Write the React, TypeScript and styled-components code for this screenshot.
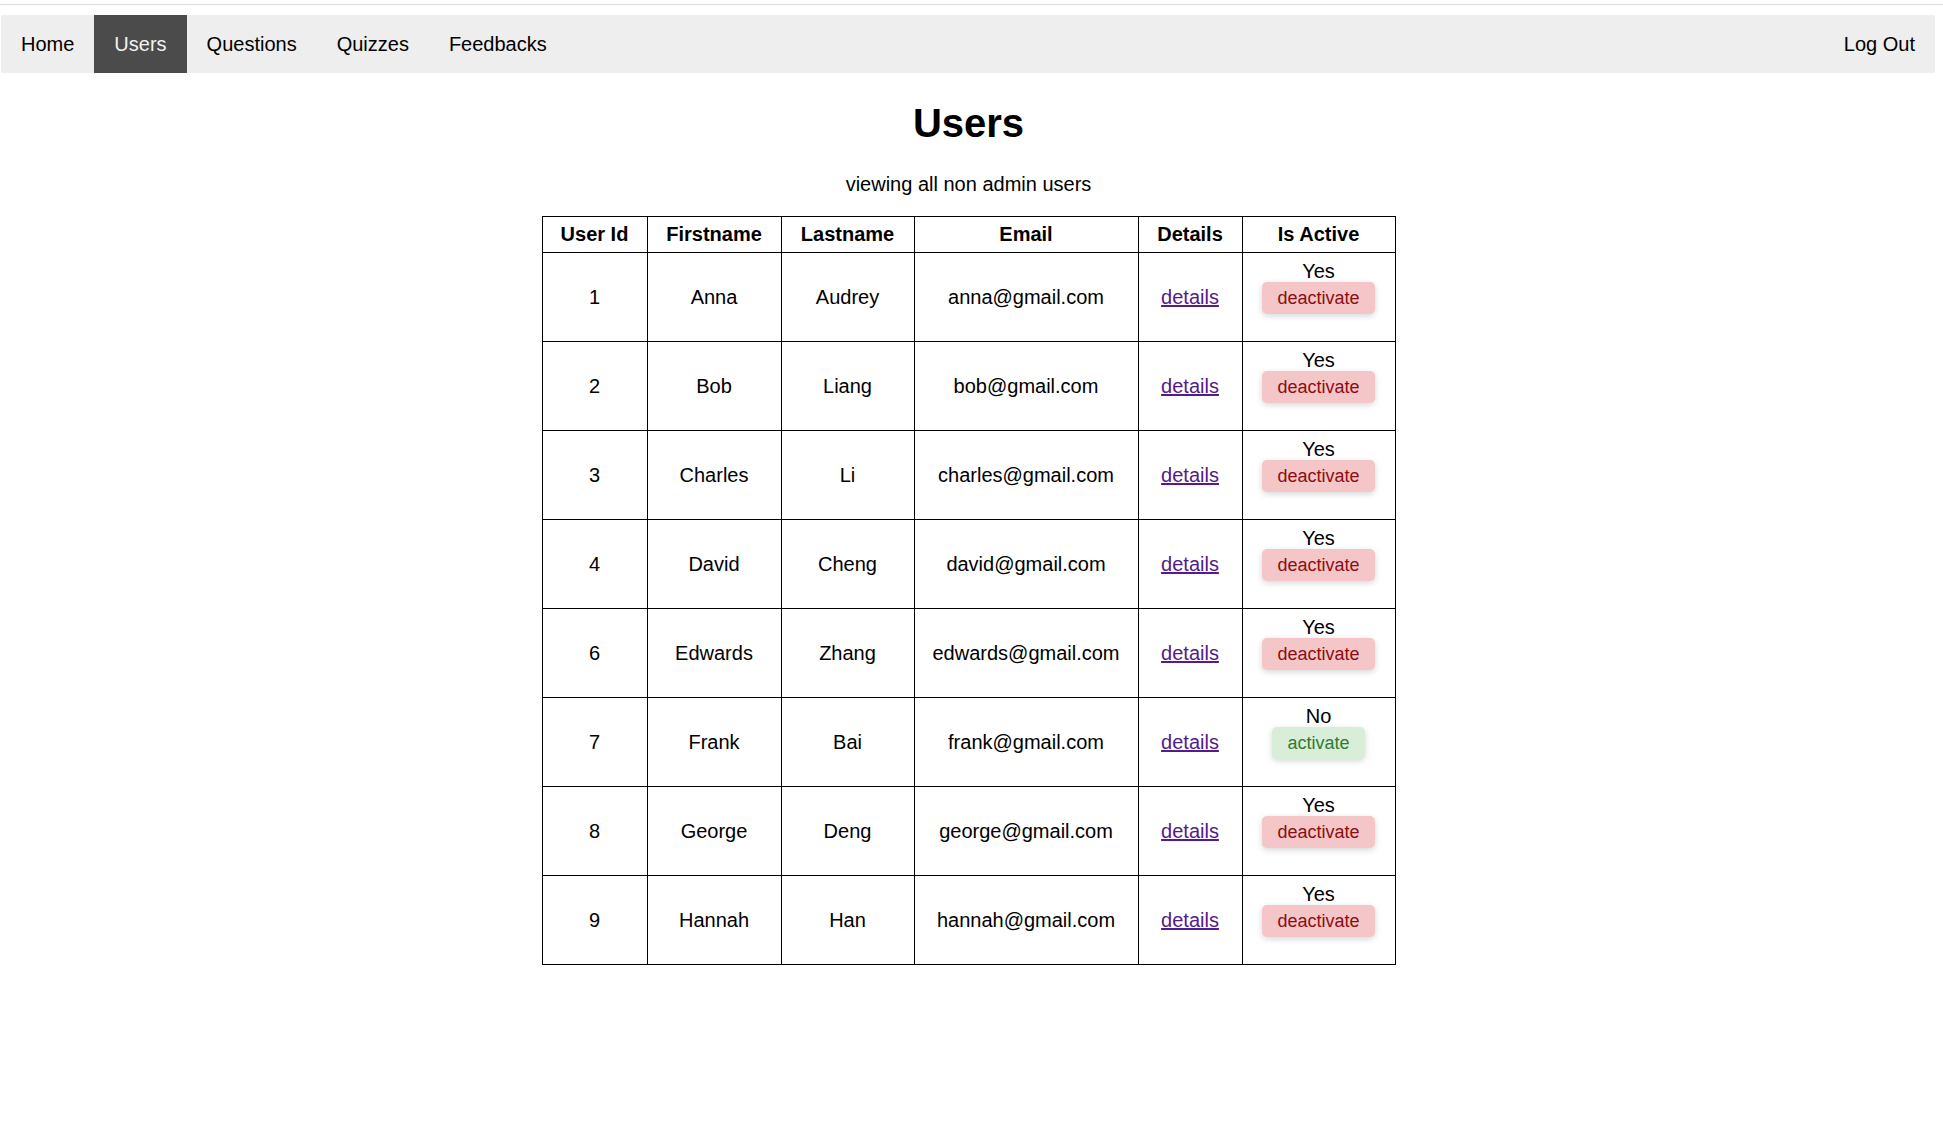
import React from "react";
import styled, { createGlobalStyle } from "styled-components";

const GlobalStyle = createGlobalStyle`
  html, body {
    margin: 0;
    padding: 0;
    background: #ffffff;
    font-family: "Liberation Sans", Arial, Helvetica, sans-serif;
    color: #000;
  }
`;

const Page = styled.div`
  display: flex;
  flex-direction: column;
  min-height: 1133px;
`;

const TopRule = styled.div`
  margin-top: 4px;
  height: 1px;
  background: #dcdcdc;
`;

const NavBar = styled.nav`
  margin: 10px 8px 0 1px;
  display: flex;
  align-items: stretch;
  background: #eeeeee;
  height: 58px;
`;

const NavLeft = styled.div`
  display: flex;
  flex: 1;
`;

const NavItem = styled.a<{ $active?: boolean }>`
  display: flex;
  align-items: center;
  padding: 0 20px;
  font-size: 20px;
  text-decoration: none;
  color: ${(p) => (p.$active ? "#f2f2f2" : "#000")};
  background: ${(p) => (p.$active ? "#4b4b4b" : "transparent")};
  cursor: pointer;
`;

const Main = styled.main`
  display: flex;
  flex-direction: column;
  align-items: center;
  margin-right: 6px;
`;

const Title = styled.h1`
  font-size: 40px;
  font-weight: bold;
  margin: 27px 0 27px;
  line-height: 46px;
`;

const Subtitle = styled.p`
  font-size: 20px;
  margin: 0 0 20px;
  line-height: 23px;
`;

const Table = styled.table`
  border-collapse: collapse;
  table-layout: fixed;
  width: 853px;
  font-size: 20px;
`;

const Th = styled.th`
  border: 1px solid #000;
  padding: 6px 0;
  font-weight: bold;
  line-height: 23px;
  text-align: center;
`;

const Td = styled.td`
  border: 1px solid #000;
  padding: 7px 0;
  line-height: 23px;
  text-align: center;
  vertical-align: middle;
`;

const DetailsLink = styled.a`
  color: #551a8b;
  text-decoration: underline;
  cursor: pointer;
`;

const Status = styled.div`
  line-height: 22px;
`;

const ToggleButton = styled.button<{ $activate?: boolean }>`
  display: block;
  margin: 0 auto 20px;
  border: none;
  border-radius: 5px;
  padding: 5.5px 15.5px;
  font-family: "Liberation Sans", Arial, Helvetica, sans-serif;
  font-size: 18px;
  line-height: 21px;
  background: ${(p) => (p.$activate ? "#d9eed8" : "#f5c6c7")};
  color: ${(p) => (p.$activate ? "#2f7a35" : "#8c0d12")};
  box-shadow: 0 2px 6px rgba(0, 0, 0, 0.16);
  cursor: pointer;
`;

type User = {
  id: number;
  first: string;
  last: string;
  email: string;
  active: boolean;
};

const users: User[] = [
  { id: 1, first: "Anna", last: "Audrey", email: "anna@gmail.com", active: true },
  { id: 2, first: "Bob", last: "Liang", email: "bob@gmail.com", active: true },
  { id: 3, first: "Charles", last: "Li", email: "charles@gmail.com", active: true },
  { id: 4, first: "David", last: "Cheng", email: "david@gmail.com", active: true },
  { id: 6, first: "Edwards", last: "Zhang", email: "edwards@gmail.com", active: true },
  { id: 7, first: "Frank", last: "Bai", email: "frank@gmail.com", active: false },
  { id: 8, first: "George", last: "Deng", email: "george@gmail.com", active: true },
  { id: 9, first: "Hannah", last: "Han", email: "hannah@gmail.com", active: true },
];

const colWidths = [105, 134, 133, 224, 104, 153];

export default function App() {
  return (
    <>
      <GlobalStyle />
      <Page>
        <TopRule />
        <NavBar>
          <NavLeft>
            <NavItem>Home</NavItem>
            <NavItem $active>Users</NavItem>
            <NavItem>Questions</NavItem>
            <NavItem>Quizzes</NavItem>
            <NavItem>Feedbacks</NavItem>
          </NavLeft>
          <NavItem>Log Out</NavItem>
        </NavBar>
        <Main>
          <Title>Users</Title>
          <Subtitle>viewing all non admin users</Subtitle>
          <Table>
            <colgroup>
              {colWidths.map((w, i) => (
                <col key={i} style={{ width: w }} />
              ))}
            </colgroup>
            <thead>
              <tr>
                <Th>User Id</Th>
                <Th>Firstname</Th>
                <Th>Lastname</Th>
                <Th>Email</Th>
                <Th>Details</Th>
                <Th>Is Active</Th>
              </tr>
            </thead>
            <tbody>
              {users.map((u) => (
                <tr key={u.id}>
                  <Td>{u.id}</Td>
                  <Td>{u.first}</Td>
                  <Td>{u.last}</Td>
                  <Td>{u.email}</Td>
                  <Td>
                    <DetailsLink>details</DetailsLink>
                  </Td>
                  <Td>
                    <Status>{u.active ? "Yes" : "No"}</Status>
                    <ToggleButton $activate={!u.active}>
                      {u.active ? "deactivate" : "activate"}
                    </ToggleButton>
                  </Td>
                </tr>
              ))}
            </tbody>
          </Table>
        </Main>
      </Page>
    </>
  );
}
